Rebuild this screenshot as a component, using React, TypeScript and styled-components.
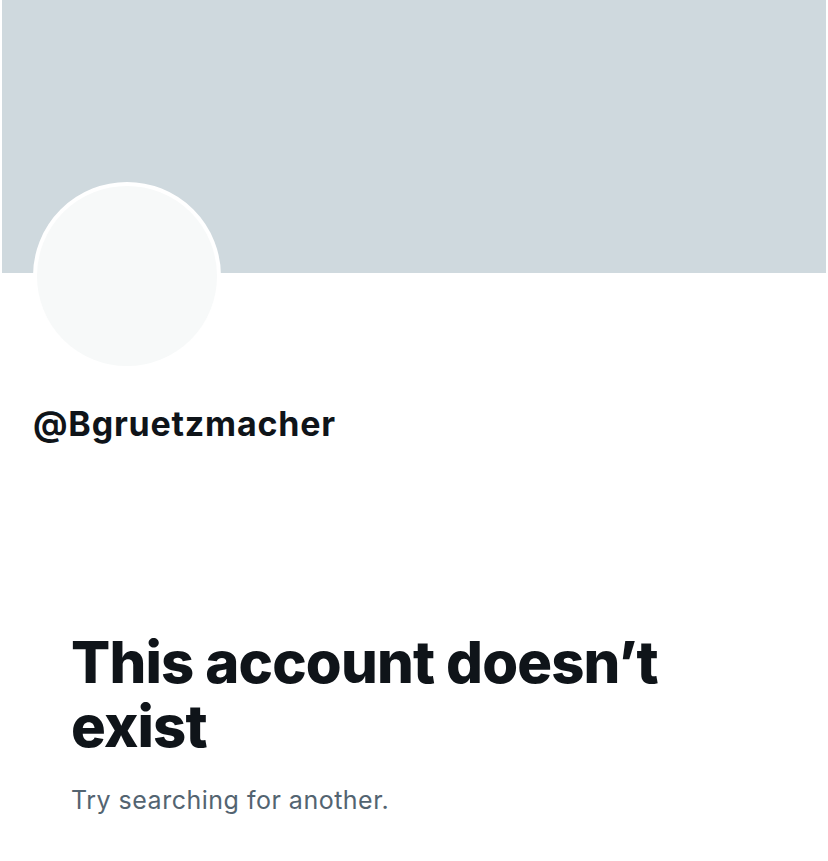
import React from "react";
import styled, { createGlobalStyle } from "styled-components";

const GlobalStyle = createGlobalStyle`
  html, body {
    margin: 0;
    padding: 0;
    background: #ffffff;
  }
  body {
    font-family: Inter, "Noto Sans", "Liberation Sans", sans-serif;
    color: #0f1419;
    -webkit-font-smoothing: antialiased;
  }
`;

const Page = styled.div`
  width: 828px;
  min-height: 861px;
  display: flex;
  flex-direction: column;
  background: #ffffff;
`;

const Banner = styled.div`
  height: 273px;
  margin: 0 2px;
  background: #cfd9de;
`;

const Avatar = styled.div`
  box-sizing: border-box;
  width: 188px;
  height: 188px;
  margin: -91px 0 0 33px;
  border-radius: 50%;
  border: 4px solid #ffffff;
  background: #f7f9f9;
`;

const Handle = styled.div`
  margin: 34px 0 0 33px;
  font-size: 34px;
  line-height: 40px;
  font-weight: 700;
  letter-spacing: 0.8px;
  color: #0f1419;
`;

const EmptyState = styled.section`
  display: flex;
  flex-direction: column;
  margin: 186px 0 0 71px;
  max-width: 640px;
`;

const Title = styled.h1`
  margin: 0;
  font-size: 58px;
  line-height: 64px;
  font-weight: 800;
  letter-spacing: -0.85px;
  color: #0f1419;
`;

const Subtitle = styled.p`
  margin: 27px 0 0 0;
  font-size: 25px;
  line-height: 30px;
  font-weight: 400;
  letter-spacing: 0.5px;
  color: #536471;
`;

export default function App() {
  return (
    <>
      <GlobalStyle />
      <Page>
        <Banner />
        <Avatar />
        <Handle>@Bgruetzmacher</Handle>
        <EmptyState>
          <Title>This account doesn’t exist</Title>
          <Subtitle>Try searching for another.</Subtitle>
        </EmptyState>
      </Page>
    </>
  );
}
